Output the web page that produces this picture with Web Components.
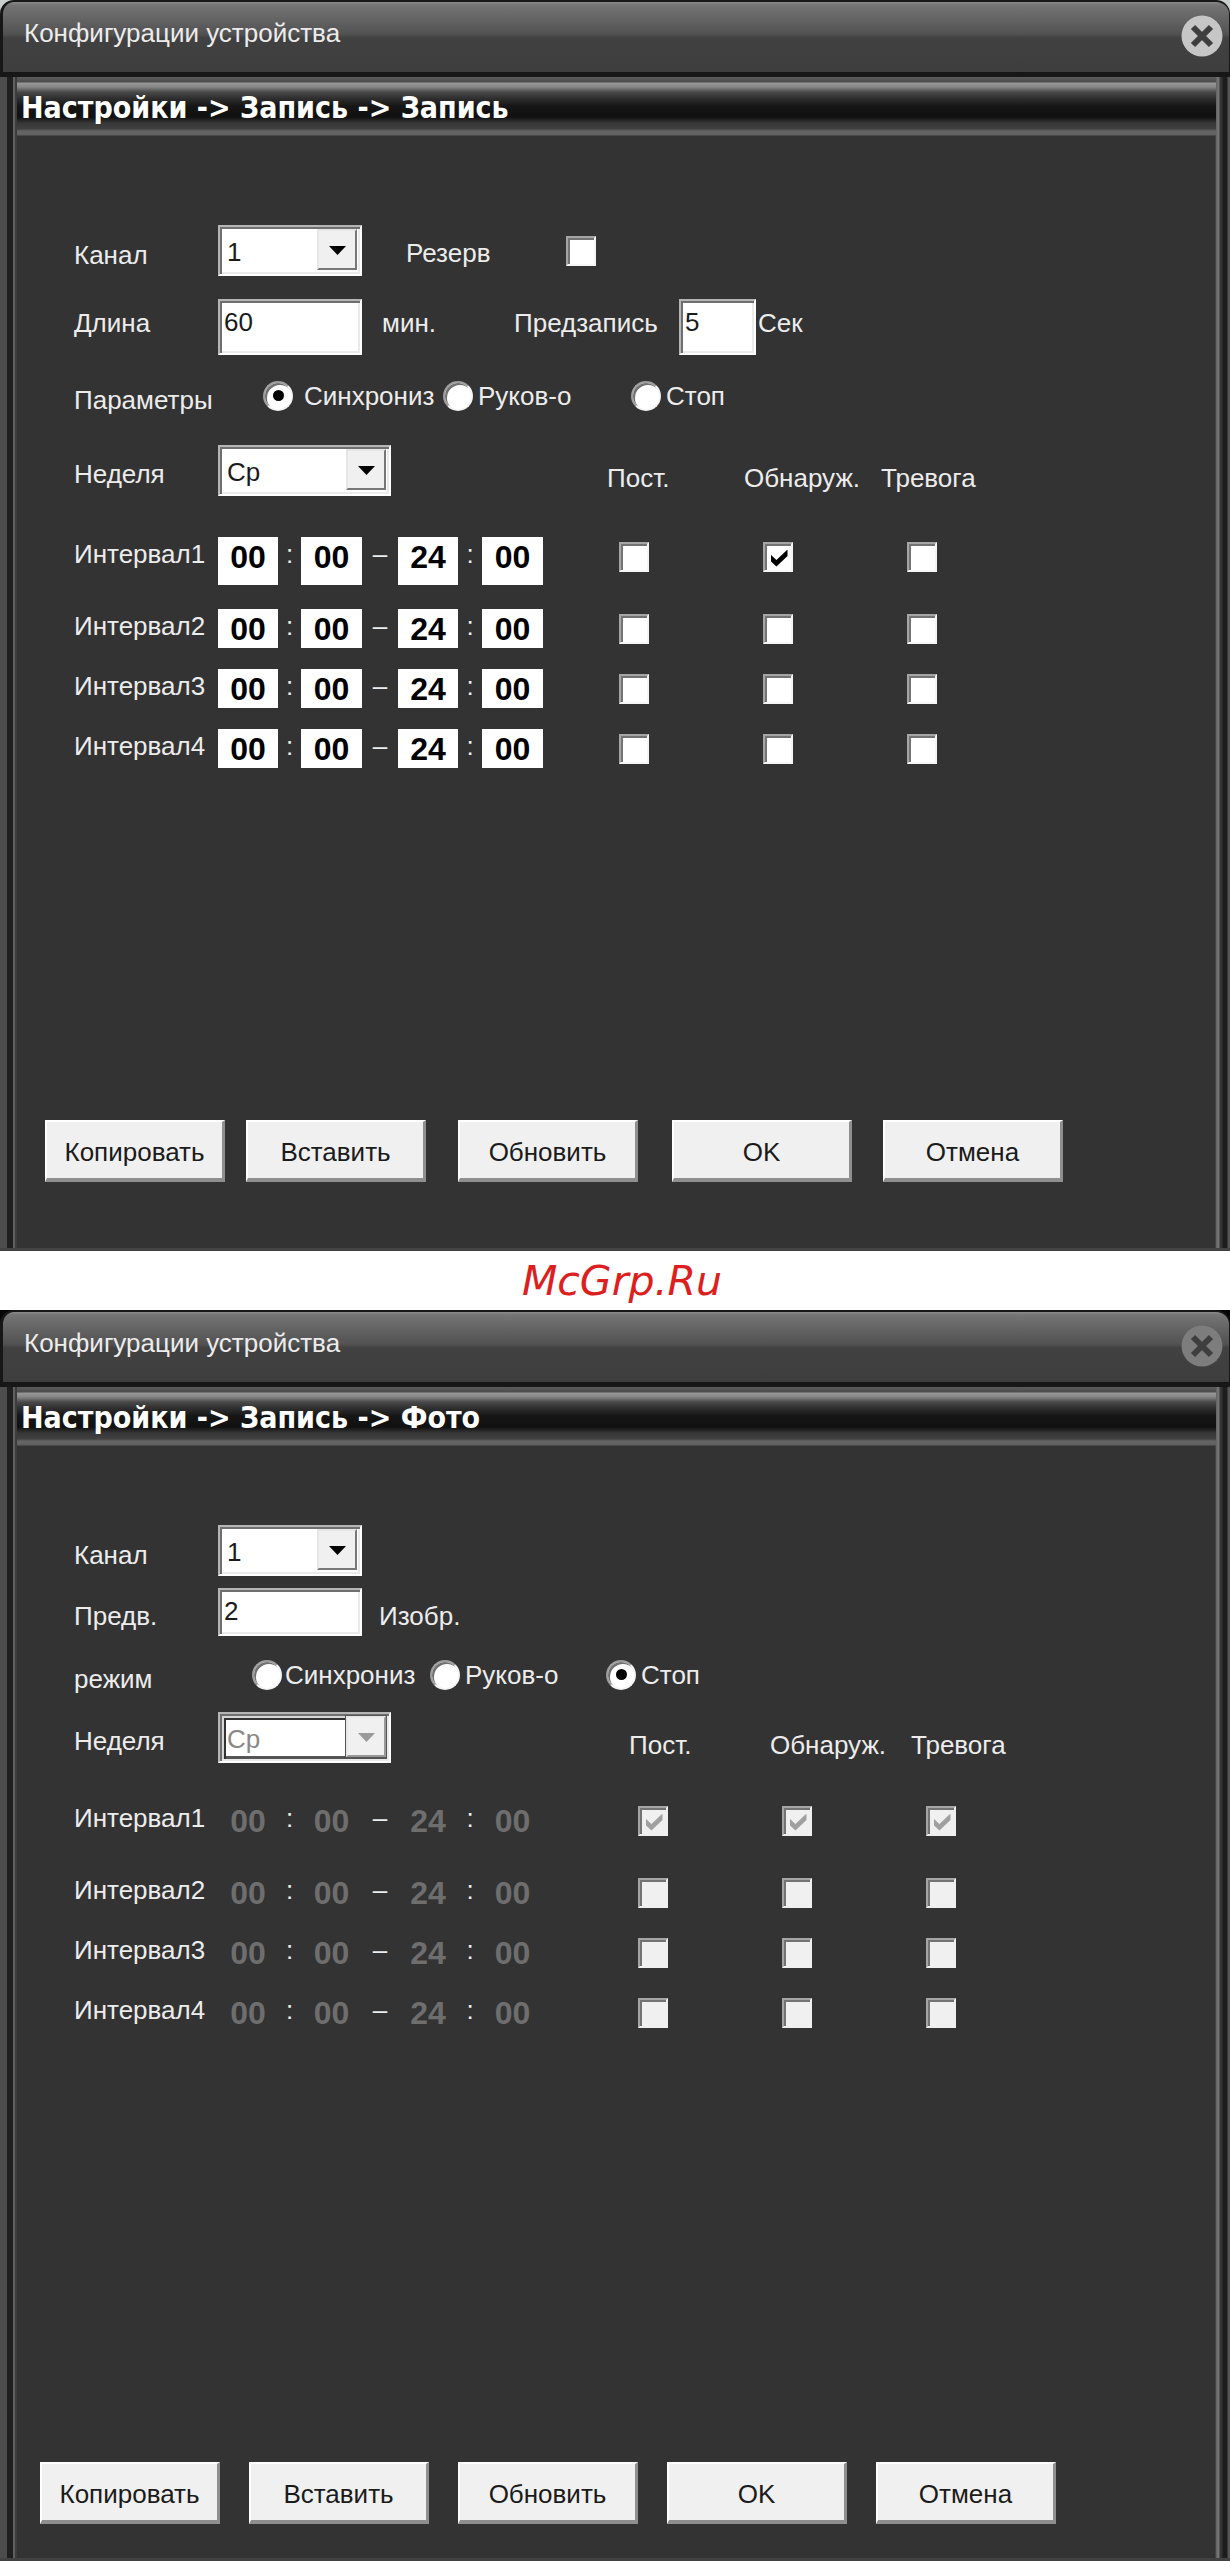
<!DOCTYPE html>
<html lang="ru">
<head>
<meta charset="utf-8">
<title>Конфигурации устройства</title>
<style>
  html, body { margin: 0; }
  body {
    background: #fff;
    color: #ececec;
    font: 26px/36px "Liberation Sans", sans-serif;
  }
  main { display: flex; flex-direction: column; }
</style>
</head>
<body>
<main>
  <device-window path="Настройки -&gt; Запись -&gt; Запись" style="--corner:#c9cfcd; --close:#c6c6c6; --body-top:89px; --foot-top:352px; --foot-bottom:66px">
    <form-row>
      <select-field label="Канал" value="1"></select-field>
      <check-field label="Резерв"></check-field>
    </form-row>
    <form-row style="--row-top:23px; --text-top:0px; --text-bottom:8px">
      <text-field label="Длина" value="60" unit="мин." style="--unit-gap:20px"></text-field>
      <text-field label="Предзапись" value="5" unit="Сек" style="--label-width:165px; --box-width:77px; --unit-gap:2px; --field-left:78px"></text-field>
    </form-row>
    <form-row style="--row-top:26px">
      <radio-set label="Параметры" options="Синхрониз,Руков-о,Стоп" selected="0" style="--set-left:45px; --columns:180px 188px auto; --first-gap:11px"></radio-set>
    </form-row>
    <schedule-table detect style="--row-top:35px; --grid-gap:41px; --head-left:64px; --head-column:137px; --check-left:76px"></schedule-table>
    <action-bar slot="footer" style="--bar-left:28px; --columns:201px 212px 214px 211px auto"></action-bar>
  </device-window>
  <site-mark>McGrp.Ru</site-mark>
  <device-window path="Настройки -&gt; Запись -&gt; Фото" style="--corner:#050505; --close:#7d7d7d; --body-top:79px; --foot-top:430px; --foot-bottom:34px">
    <form-row>
      <select-field label="Канал" value="1"></select-field>
    </form-row>
    <form-row style="--row-top:12px; --box-height:48px; --box-drop:2px">
      <text-field label="Предв." value="2" unit="Изобр." style="--unit-gap:17px"></text-field>
    </form-row>
    <form-row style="--row-top:24px">
      <radio-set label="режим" options="Синхрониз,Руков-о,Стоп" selected="2" style="--set-left:34px; --columns:178px 176px auto; --first-gap:3px"></radio-set>
    </form-row>
    <schedule-table off style="--row-top:23px; --grid-gap:38px; --head-left:86px; --head-column:141px; --check-left:95px"></schedule-table>
    <action-bar slot="footer" style="--bar-left:23px; --columns:209px 209px 209px 209px auto"></action-bar>
  </device-window>
</main>
<script>
const shared = `
  *, *::before, *::after { box-sizing: border-box; }
  .text { padding: var(--text-top, 8px) 0 var(--text-bottom, 0px); white-space: nowrap; }
  .name { width: var(--label-width, 144px); flex: none; }
  input, select, button { margin: 0; font: inherit; color: #1b1b1b; border-radius: 0; outline-offset: 2px; }
  .box {
    width: var(--box-width, 144px); height: var(--box-height, 56px); padding: 0 0 var(--box-drop, 10px) 4px;
    border: 2px solid; border-color: #b5b5b5 #fff #fff #b5b5b5;
    background: #fff; box-shadow: inset 2px 2px 0 #6f6f6f, inset -2px -2px 0 #ebebeb;
  }
  .combo { display: grid; width: var(--box-width, 144px); height: 51px; flex: none; }
  .combo > * { grid-area: 1 / 1; }
  .combo select {
    appearance: none; width: 100%; height: 100%; padding: 2px 44px 0 7px;
    border: 2px solid; border-color: #b5b5b5 #fff #fff #b5b5b5;
    background: #fff; box-shadow: inset 2px 2px 0 #6f6f6f, inset -2px -2px 0 #ebebeb; opacity: 1;
  }
  .combo svg {
    justify-self: end; margin: 4px 5px 0 0; width: 40px; height: 41px; pointer-events: none;
    background: #f0f0f0; border: 2px solid; border-color: #e6e6e6 #777 #777 #e6e6e6;
    fill: #000;
  }
  .combo select:disabled { color: #888; box-shadow: inset 2px 2px 0 #6f6f6f, inset -2px -2px 0 #ebebeb, inset 4px 4px 0 #d5d5d5, inset 6px 6px 0 #333, inset -5px -5px 0 #555; }
  .combo select:disabled + svg { fill: #9b9b9b; border-color: #e8e8e8 #999 #999 #e8e8e8; outline: 1px solid #555; }
  .tick {
    appearance: none; display: grid; place-items: center; width: 30px; height: 30px; flex: none;
    border: 2px solid; border-color: #a5a5a5 #f6f6f6 #f6f6f6 #a5a5a5;
    background: #fff; box-shadow: inset 2px 2px 0 #737373;
  }
  .tick:disabled { background: #f0f0f0; border-color: #a5a5a5 #f0f0f0 #f0f0f0 #a5a5a5; }
  .tick:checked::before {
    content: ""; width: 17px; height: 17px; margin: 2px 0 0 2px; background: #000;
    clip-path: polygon(0 30%, 35% 62%, 100% 0, 100% 38%, 35% 100%, 0 68%);
  }
  .tick:disabled:checked::before { background: #a0a0a0; }
`;
const arrow = '<svg viewBox="0 0 36 37" aria-hidden="true"><path d="M10 15h17l-8.500 9z"/></svg>';

class BaseElement extends HTMLElement {
  connectedCallback() {
    if (this.shadowRoot) return;
    const template = document.createElement('template');
    template.innerHTML = `<style>${shared}${this.styles()}</style>${this.markup()}`;
    this.attachShadow({ mode: 'open' }).append(template.content.cloneNode(true));
  }
  get(name) { return this.getAttribute(name) || ''; }
}

customElements.define('device-window', class extends BaseElement {
  styles() { return `
    :host { display: block; background: var(--corner); }
    section { display: flex; flex-direction: column; }
    header {
      display: flex; align-items: flex-start; justify-content: space-between; height: 77px;
      padding: 11px 6px 0 21px; border: solid #171717; border-width: 2px 1px 5px 3px;
      border-radius: 14px 14px 0 0;
      background: linear-gradient(#8a8a8a 0, #747474 3px, #525252 32px, #414141 36px, #3e3e3e 100%);
    }
    h2 { margin: 0; font: inherit; padding-top: 2px; }
    button { appearance: none; border: 0; padding: 0; background: none; margin-top: 2px; width: 42px; height: 42px; }
    button svg { display: block; width: 42px; height: 42px; }
    .frame {
      display: flex; background: linear-gradient(90deg, #4d4d4d 0 7px, #202020 7px 13px, #606060 13px 15px, #3c3c3c 15px 17px, #333 17px calc(100% - 15px), #737373 calc(100% - 13px) calc(100% - 11px), #343434 calc(100% - 10px) calc(100% - 8px), #1d1d1d calc(100% - 7px) calc(100% - 3px), #555 calc(100% - 2px));
      padding: 0 14px 0 17px; border-bottom: 3px solid #424242;
    }
    .inner { flex: 1; min-width: 0; display: flex; flex-direction: column; }
    h3 {
      margin: 0; height: 59px; padding: 13px 0 0 4px; color: #fff; white-space: nowrap;
      font: bold 30px/36px "DejaVu Sans Condensed", "DejaVu Sans", sans-serif;
      background: linear-gradient(#5c5c5c 0, #4b4b4b 5px, #989898 6px, #858585 10px, #494949 15px, #303030 21px, #161616 29px, #101010 40px, #373737 46px, #414141 52px, #656565 54px, #606060 58px, #333 59px);
    }
    .body { display: flex; flex-direction: column; padding: var(--body-top) 0 0 57px; }
    .foot { padding: var(--foot-top) 0 var(--foot-bottom); }
  `; }
  markup() { return `
    <section>
      <header><h2>Конфигурации устройства</h2>
        <button type="button" aria-label="Закрыть"><svg viewBox="0 0 42 42"><circle cx="21" cy="21" r="20.500" fill="var(--close)"/><path d="M12 12l18 18M30 12L12 30" stroke="#3e3e3e" stroke-width="6" fill="none"/></svg></button>
      </header>
      <div class="frame"><div class="inner">
        <h3></h3>
        <div class="body"><slot></slot></div>
        <div class="foot"><slot name="footer"></slot></div>
      </div></div>
    </section>`; }
  connectedCallback() {
    super.connectedCallback();
    this.shadowRoot.querySelector('h3').textContent = this.get('path');
  }
});

customElements.define('form-row', class extends BaseElement {
  styles() { return `:host { display: flex; align-items: center; margin-top: var(--row-top, 0px); }`; }
  markup() { return '<slot></slot>'; }
});

customElements.define('select-field', class extends BaseElement {
  styles() { return ':host { display: flex; align-items: center; }'; }
  markup() { return `<label class="text name" for="f">${this.get('label')}</label>
    <span class="combo"><select id="f"><option>${this.get('value')}</option></select>${arrow}</span>`; }
});

customElements.define('text-field', class extends BaseElement {
  styles() { return `:host { display: flex; align-items: center; margin-left: var(--field-left, 0px); }
    .unit { margin-left: var(--unit-gap, 0px); }`; }
  markup() { return `<label class="text name" for="f">${this.get('label')}</label>
    <input class="box" id="f" type="text" value="${this.get('value')}"><span class="text unit">${this.get('unit')}</span>`; }
});

customElements.define('check-field', class extends BaseElement {
  styles() { return `:host { display: flex; align-items: center; margin-left: 44px; --text-top: 4px; --label-width: 160px; }`; }
  markup() { return `<label class="text name" for="f">${this.get('label')}</label><input class="tick" id="f" type="checkbox">`; }
});

customElements.define('radio-set', class extends BaseElement {
  styles() { return `
    :host { display: flex; align-items: center; height: 29px; }
    .set { display: grid; grid-template-columns: var(--columns); margin-left: var(--set-left); }
    label { display: flex; align-items: center; gap: 5px; white-space: nowrap; }
    label:first-child { gap: var(--first-gap); }
    input {
      appearance: none; display: grid; place-items: center; width: 30px; height: 30px; flex: none;
      border-radius: 50%; border: 2px solid; border-color: #9d9d9d #f4f4f4 #f4f4f4 #9d9d9d;
      background: #fff; box-shadow: inset 2px 2px 0 #707070;
    }
    input:checked::before { content: ""; width: 11px; height: 11px; border-radius: 50%; background: #000; }
  `; }
  markup() {
    const items = this.get('options').split(',').map((text, i) =>
      `<label><input type="radio" name="mode"${String(i) === this.get('selected') ? ' checked' : ''}>${text}</label>`).join('');
    return `<span class="text name" id="n">${this.get('label')}</span><div class="set" role="radiogroup" aria-labelledby="n">${items}</div>`;
  }
});

customElements.define('schedule-table', class extends BaseElement {
  styles() { return `
    :host { display: block; margin-top: var(--row-top); }
    table, thead, tbody { display: block; }
    th, td { padding: 0; text-align: left; font-weight: normal; }
    thead tr { display: grid; grid-template-columns: 144px 325px var(--head-column) var(--head-column) auto; align-items: center; height: 51px; }
    thead th.text { padding: 6px 0 0; }
    thead th:nth-child(n+3) { padding: 14px 0 0 var(--head-left); white-space: nowrap; }
    .combo { --box-width: 173px; }
    tbody { padding-top: var(--grid-gap); }
    tbody tr { display: grid; grid-template-columns: 144px 325px var(--check-left) 144px 144px 144px; align-items: start; margin-bottom: 21px; }
    tbody tr > :nth-child(3) { grid-column: 4; }
    tbody tr:first-child { margin-bottom: 24px; --time-height: 48px; }
    tbody tr:last-child { margin-bottom: 0; }
    tbody th { line-height: 34px; }
    .times { display: grid; grid-template-columns: 60px 23px 61px 36px 60px 24px 61px; text-align: center; line-height: 34px; }
    .times input {
      width: 100%; min-width: 0; height: var(--time-height, 39px); padding: 1px 0 calc(var(--time-height, 39px) - 39px); border: 0; background: #fff;
      color: #000; text-align: center; font: bold 32px/38px "Liberation Sans", sans-serif;
    }
    .times input:disabled { background: transparent; color: #6e6e6e; }
    .tick { margin-top: 5px; }
  `; }
  markup() {
    const off = this.hasAttribute('off') ? ' disabled' : '';
    const kinds = ['Пост.', 'Обнаруж.', 'Тревога'];
    const rows = [1, 2, 3, 4].map(n => {
      const time = (v, what) => `<input type="text" value="${v}" aria-label="${what}"${off}>`;
      const ticks = kinds.map((kind, k) => {
        const on = n === 1 && (off || (this.hasAttribute('detect') && k === 1)) ? ' checked' : '';
        return `<td><input class="tick" type="checkbox" aria-label="${kind}"${on}${off}></td>`;
      }).join('');
      return `<tr><th scope="row">Интервал${n}</th><td><div class="times">${time('00', 'Начало, часы')}<span>:</span>${time('00', 'Начало, минуты')}<span>–</span>${time('24', 'Конец, часы')}<span>:</span>${time('00', 'Конец, минуты')}</div></td>${ticks}</tr>`;
    }).join('');
    return `<table><thead><tr><th class="text"><label for="w">Неделя</label></th>
      <td><span class="combo"><select id="w"${off}><option>Ср</option></select>${arrow}</span></td>
      ${kinds.map(k => `<th scope="col">${k}</th>`).join('')}</tr></thead><tbody>${rows}</tbody></table>`;
  }
});

customElements.define('action-bar', class extends BaseElement {
  styles() { return `
    :host { display: grid; grid-template-columns: var(--columns); padding-left: var(--bar-left); }
    button {
      width: 180px; height: 62px; padding: 4px 0 0; background: #f0f0f0; white-space: nowrap;
      border: solid; border-width: 2px 3px 4px 2px; border-color: #fff #8f8f8f #8f8f8f #fff;
    }
  `; }
  markup() { return ['Копировать', 'Вставить', 'Обновить', 'OK', 'Отмена'].map(t => `<button type="button">${t}</button>`).join(''); }
});

customElements.define('site-mark', class extends BaseElement {
  styles() { return `:host { display: block; padding: 2px 0 0 14px; text-align: center; color: #dc2020; background: #fff;
    font: italic 41px/57px "DejaVu Sans", sans-serif; }`; }
  markup() { return '<slot></slot>'; }
});
</script>
</body>
</html>
